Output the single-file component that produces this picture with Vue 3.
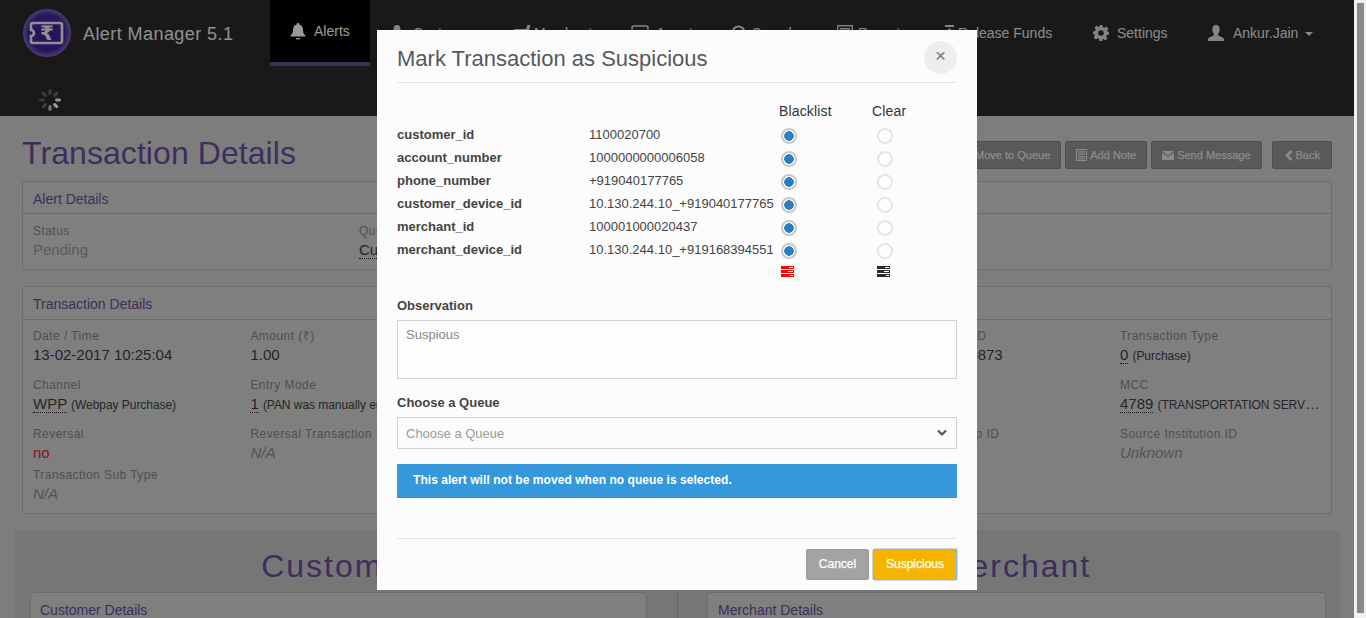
<script setup>
const navItems = [
  { key: 'alerts', label: 'Alerts', w: 100, box: 24, active: true },
  { key: 'person', label: 'Customer', w: 123, box: 23 },
  { key: 'cart', label: 'Merchant', w: 118, box: 21 },
  { key: 'square', label: 'Agent', w: 100, box: 25 },
  { key: 'search', label: 'Search', w: 106, box: 21 },
  { key: 'report', label: 'Reports', w: 108, box: 21 },
  { key: 'release', label: 'Release Funds', w: 148, box: 13 },
  { key: 'gear', label: 'Settings', w: 115, box: 24 },
  { key: 'user', label: 'Ankur.Jain', w: 150, box: 25, caret: true }
]
const dots = [
  { a: 0, o: 0.95 }, { a: 45, o: 1 }, { a: 90, o: 0.7 }, { a: 135, o: 0.3 },
  { a: 180, o: 0.25 }, { a: 225, o: 0.25 }, { a: 270, o: 0.28 }, { a: 315, o: 0.3 }
]
const txnFields = [
  { label: 'Date / Time', value: '13-02-2017 10:25:04' },
  { label: 'Amount (₹)', value: '1.00' },
  { label: 'Authorization Code', value: '482913' },
  { label: 'Response Code', value: '00' },
  { label: 'Transaction ID', value: '017021300873' },
  { label: 'Transaction Type', abbr: '0', note: '(Purchase)' },
  { label: 'Channel', abbr: 'WPP', note: '(Webpay Purchase)' },
  { label: 'Entry Mode', abbr: '1', note: '(PAN was manually entered)' },
  { label: 'Terminal', value: '10293847' },
  { label: 'Card Type', value: 'Debit' },
  { label: 'Currency', value: 'INR' },
  { label: 'MCC', abbr: '4789', note: '(TRANSPORTATION SERVICES)' },
  { label: 'Reversal', value: 'no', tone: 'red', tight: true },
  { label: 'Reversal Transaction ID', value: 'N/A', tone: 'na', tight: true },
  { label: 'Source', value: 'N/A', tone: 'na', tight: true },
  { label: 'Destination', value: 'N/A', tone: 'na', tight: true },
  { label: 'Source Group ID', value: 'N/A', tone: 'na', tight: true },
  { label: 'Source Institution ID', value: 'Unknown', tone: 'na', tight: true },
  { label: 'Transaction Sub Type', value: 'N/A', tone: 'na', tight: true }
]
const entities = [
  { key: 'customer_id', value: '1100020700' },
  { key: 'account_number', value: '1000000000006058' },
  { key: 'phone_number', value: '+919040177765' },
  { key: 'customer_device_id', value: '10.130.244.10_+919040177765' },
  { key: 'merchant_id', value: '100001000020437' },
  { key: 'merchant_device_id', value: '10.130.244.10_+919168394551' }
]
</script>

<template>
  <div class="app">
    <div class="main">
      <header class="navbar">
        <div class="nav-top">
          <div class="brand">
            <svg class="logo" width="48" height="48" viewBox="0 0 48 48">
              <defs>
                <radialGradient id="lg" cx="50%" cy="50%" r="52%">
                  <stop offset="0%" stop-color="#3f1f9c" />
                  <stop offset="72%" stop-color="#42249a" />
                  <stop offset="100%" stop-color="#8a70c4" />
                </radialGradient>
              </defs>
              <circle cx="24" cy="24" r="24" fill="url(#lg)" />
              <path d="M10 14h27a2 2 0 0 1 2 2v16a2 2 0 0 1-2 2H10a2 2 0 0 1-2-2v-5a3 3 0 0 0 0-6v-5a2 2 0 0 1 2-2z" fill="none" stroke="#f2f2f2" stroke-width="2.6" />
              <text x="24" y="31" class="rupee">₹</text>
            </svg>
            <span class="brand-name">Alert Manager 5.1</span>
          </div>
          <nav class="nav">
            <a v-for="item in navItems" :key="item.key" class="nav-item" :class="{ active: item.active }" :style="{ width: item.w + 'px' }">
              <span class="nav-icon" :style="{ width: item.box + 'px' }">
                <svg v-if="item.key === 'alerts'" width="16" height="17" viewBox="0 0 16 17"><path d="M8 0a1.3 1.3 0 0 1 1.3 1.5C12 2.2 13 4.4 13 7c0 3 1 4.300 2.500 5.500v1H.5v-1C2 11.300 3 10 3 7c0-2.600 1-4.800 3.700-5.500A1.300 1.300 0 0 1 8 0z" fill="#fff"/><rect x="6" y="15" width="4" height="1.300" fill="#fff"/></svg>
                <svg v-else-if="item.key === 'person'" width="14" height="16" viewBox="0 0 14 16"><path d="M7 0c2.500 0 3.500 2 3.500 4.500S9 9 9 10c0 1 5 1.500 5 4v2H0v-2c0-2.500 5-3 5-4S3.500 7 3.500 4.500 4.500 0 7 0z" fill="#ddd"/></svg>
                <svg v-else-if="item.key === 'cart'" width="18" height="16" viewBox="0 0 18 16"><path d="M17 0v2L14 11H4L1 4h12l1.500-4z" fill="#ddd"/></svg>
                <svg v-else-if="item.key === 'square'" width="18" height="16" viewBox="0 0 18 16"><rect x="1" y="1" width="16" height="14" rx="2" fill="none" stroke="#ddd" stroke-width="1.500"/></svg>
                <svg v-else-if="item.key === 'search'" width="18" height="18" viewBox="0 0 18 18"><circle cx="7.500" cy="7.500" r="6" fill="none" stroke="#ddd" stroke-width="2"/><path d="M12 12l5 5" stroke="#ddd" stroke-width="2.500"/></svg>
                <svg v-else-if="item.key === 'report'" width="16" height="16" viewBox="0 0 16 16"><rect x=".7" y=".7" width="14.600" height="14.600" fill="none" stroke="#ddd" stroke-width="1.400"/><path d="M3 3h10v1.500H3zM3 6.500h10V8H3zM3 10h10v1.500H3z" fill="#ddd"/></svg>
                <svg v-else-if="item.key === 'release'" width="9" height="16" viewBox="0 0 9 16"><path d="M0 0h9v2H0zM4.500 3L8 7H5.500v9h-2V7H1z" fill="#ddd"/></svg>
                <svg v-else-if="item.key === 'gear'" width="16" height="16" viewBox="0 0 16 16"><path d="M6.500 0h3l.4 2.200 1.500.6 1.900-1.300 2.100 2.100-1.300 1.900.6 1.500L16 6.500v3l-2.200.4-.6 1.500 1.300 1.900-2.100 2.100-1.900-1.300-1.500.6L9.500 16h-3l-.4-2.200-1.500-.6-1.900 1.300-2.100-2.100 1.300-1.900-.6-1.500L0 9.500v-3l2.200-.4.6-1.500L1.500 2.700l2.100-2.100 1.900 1.300 1.500-.6zM8 5.200a2.800 2.800 0 1 0 0 5.600 2.800 2.800 0 0 0 0-5.600z" fill="#ddd" fill-rule="evenodd"/></svg>
                <svg v-else width="16" height="16" viewBox="0 0 16 16"><path d="M8 0c2.500 0 3.700 2 3.700 4.500S10 9 10 10c0 1.200 6 1.800 6 4.500V16H0v-1.500C0 11.800 6 11.200 6 10c0-1-1.700-3-1.700-5.500S5.500 0 8 0z" fill="#ddd"/></svg>
              </span>
              <span>{{ item.label }}</span>
              <span v-if="item.caret" class="caret"></span>
            </a>
          </nav>
        </div>
        <div class="nav-bottom">
          <svg width="22" height="22" viewBox="0 0 22 22">
            <ellipse v-for="d in dots" :key="d.a" cx="19" cy="11" rx="3" ry="1.700" fill="#fff" :opacity="d.o" :transform="`rotate(${d.a} 11 11)`" />
          </svg>
        </div>
      </header>

      <main class="content">
        <div class="title-row">
          <h1>Transaction Details</h1>
          <div class="actions">
            <button class="btn">
              <svg width="12" height="11" viewBox="0 0 12 11"><path d="M0 1h12v9H0z" fill="#e6e6e6"/></svg>Move to Queue
            </button>
            <button class="btn">
              <svg width="11" height="12" viewBox="0 0 11 12"><path d="M0 0h11v12H0zM1 1v10h9V1zM2 2.200h7v1.200H2zM2 4.600h7v1.200H2zM2 7h7v1.200H2zM2 9.300h7v1H2z" fill="#e6e6e6" fill-rule="evenodd"/></svg>Add Note
            </button>
            <button class="btn">
              <svg width="12" height="9" viewBox="0 0 12 9"><path d="M0 0h12L6 4.500zM0 1.500l6 4.500 6-4.500V9H0z" fill="#e6e6e6"/></svg>Send Message
            </button>
            <button class="btn back">
              <svg width="9" height="11" viewBox="0 0 9 11"><path d="M6.500 0L8.500 2 5 5.500 8.500 9l-2 2L1 5.500z" fill="#e6e6e6"/></svg>Back
            </button>
          </div>
        </div>

        <section class="panel alert-panel">
          <div class="panel-head">Alert Details</div>
          <div class="alert-body">
            <div class="field">
              <div class="label">Status</div>
              <div class="value pending">Pending</div>
            </div>
            <div class="field">
              <div class="label">Queue</div>
              <div class="value"><abbr>Customer Queue</abbr></div>
            </div>
          </div>
        </section>

        <section class="panel txn-panel">
          <div class="panel-head">Transaction Details</div>
          <div class="txn-body">
            <div v-for="f in txnFields" :key="f.label" class="field" :class="{ tight: f.tight }">
              <div class="label">{{ f.label }}</div>
              <div class="value" :class="f.tone">
                <template v-if="f.abbr"><abbr>{{ f.abbr }}</abbr> <small>{{ f.note }}</small></template>
                <template v-else>{{ f.value }}</template>
              </div>
            </div>
          </div>
        </section>

        <section class="split">
          <div class="split-col">
            <h2>Customer</h2>
            <div class="panel"><div class="panel-head">Customer Details</div></div>
          </div>
          <div class="split-rule"></div>
          <div class="split-col wide">
            <h2>Merchant</h2>
            <div class="panel"><div class="panel-head">Merchant Details</div></div>
          </div>
        </section>
      </main>

      <div class="overlay"></div>

      <div class="modal">
        <div class="modal-head">
          <div class="modal-title">Mark Transaction as Suspicious</div>
          <button class="close">×</button>
        </div>

        <div class="grid-head">
          <span></span><span></span><span>Blacklist</span><span>Clear</span>
        </div>
        <div v-for="row in entities" :key="row.key" class="grid-row">
          <span class="k">{{ row.key }}</span>
          <span class="v">{{ row.value }}</span>
          <span class="radio-cell"><i class="radio on"></i></span>
          <span class="radio-cell"><i class="radio"></i></span>
        </div>
        <div class="grid-icons">
          <span></span><span></span>
          <span class="srv-cell">
            <svg width="13" height="11" viewBox="0 0 13 11"><path d="M0 0h13v3H0zM0 4h13v3H0zM0 8h13v3H0z" fill="#f00"/><path d="M8 1h4v1H8zM7 5h5v1H7zM9 9h3v1H9z" fill="#fff"/></svg>
          </span>
          <span class="srv-cell">
            <svg width="13" height="11" viewBox="0 0 13 11"><path d="M0 0h13v3H0zM0 4h13v3H0zM0 8h13v3H0z" fill="#2b2b2b"/><path d="M8 1h4v1H8zM7 5h5v1H7zM9 9h3v1H9z" fill="#fff"/></svg>
          </span>
        </div>

        <label class="f-label obs">Observation</label>
        <div class="textarea">Suspious</div>

        <label class="f-label queue">Choose a Queue</label>
        <div class="select">
          <span>Choose a Queue</span>
          <svg width="10" height="8" viewBox="0 0 10 8"><path d="M1 1.500l4 4 4-4" fill="none" stroke="#555" stroke-width="2.200"/></svg>
        </div>

        <div class="info">This alert will not be moved when no queue is selected.</div>

        <div class="modal-foot">
          <button class="m-btn cancel">Cancel</button>
          <button class="m-btn primary">Suspicious</button>
        </div>
      </div>
    </div>
    <div class="scrollbar"><div class="thumb"></div></div>
  </div>
</template>

<style>
html, body { margin: 0; padding: 0; overflow: hidden; }
</style>

<style scoped>
* { box-sizing: border-box; }
.app {
  display: flex;
  height: 618px;
  overflow: hidden;
  font-family: "Liberation Sans", Arial, sans-serif;
  font-size: 14px;
}
.main { position: relative; flex: 1; overflow: hidden; background: #d0d0d0; }
.scrollbar { width: 12px; background: #f1f1f1; padding: 3px 2px 5px 3px; }
.thumb { height: 100%; background: #8a8a8a; }

.navbar { height: 116px; background: #2b2b2b; }
.nav-top { display: flex; height: 66px; }
.brand { display: flex; align-items: flex-start; width: 270px; padding: 9px 0 0 23px; }
.logo { flex: none; }
.rupee { font: bold 20px "Liberation Sans", "DejaVu Sans", sans-serif; fill: #f2f2f2; text-anchor: middle; }
.brand-name { margin: 15px 0 0 12px; font-size: 18px; line-height: 21px; letter-spacing: 0.43px; color: #eee; }
.nav { display: flex; }
.nav-item { display: flex; align-items: flex-start; padding: 25px 0 0 20px; line-height: 16px; color: #e6e6e6; flex: none; }
.nav-item.active { background: #000; color: #fff; border-bottom: 4px solid #664e9c; padding-top: 23px; }
.nav-icon { display: flex; flex: none; align-items: flex-start; }
.caret {
  width: 0; height: 0; margin: 7px 0 0 7px;
  border-left: 4px solid transparent; border-right: 4px solid transparent; border-top: 4px solid #e6e6e6;
}
.nav-bottom { display: flex; padding: 23px 0 0 39px; }

.content { padding: 0 22px; }
.title-row { display: flex; justify-content: space-between; align-items: center; height: 65px; padding-top: 10px; }
h1 { margin: 0; font-size: 32px; letter-spacing: 0.07px; font-weight: 400; color: #664e9c; line-height: 55px; }
.actions { display: flex; gap: 4px; padding-top: 3px; }
.btn {
  display: flex; align-items: center; gap: 3px; height: 28px; padding: 0 10px;
  background: #949494; border: 1px solid #848484; border-radius: 2px;
  font: 400 11px "Liberation Sans", Arial, sans-serif; color: #e6e6e6;
  -webkit-text-stroke: 0.25px #e6e6e6;
}
.back { margin-left: 6px; padding: 0 11px; }

.panel { background: #d4d4d4; border: 1px solid #b4b4b4; border-radius: 3px; }
.panel-head { height: 32px; padding-left: 10px; line-height: 34px; color: #664e9c; border-bottom: 1px solid #b4b4b4; }
.alert-panel { margin-top: 0; height: 89px; }
.alert-body { display: grid; grid-template-columns: repeat(4, 326px); padding: 9px 10px 0; }
.txn-panel { margin-top: 16px; height: 228px; }
.txn-panel .panel-head { height: 33px; }
.txn-body { display: grid; grid-template-columns: repeat(6, 200.4px); column-gap: 17px; padding: 8px 10px 0; }
.field { min-width: 0; margin-bottom: 12px; }
.field.tight { margin-bottom: 4px; }
.label { font-size: 12px; line-height: 17px; letter-spacing: 0.45px; color: #858585; white-space: nowrap; }
.value { height: 21px; margin-top: -1px; font-size: 15px; line-height: 21px; color: #3e3e3e; white-space: nowrap; overflow: hidden; text-overflow: ellipsis; }
.value small { font-size: 12px; letter-spacing: -0.05px; }
.value abbr { border-bottom: 1px dotted #222; }
.pending { color: #999; }
.red { color: #e61b35; }
.na { color: #8c8c8c; font-style: italic; }

.split { display: flex; margin: 16px -8px 0; height: 120px; padding: 0 14px 0 16px; background: #c5c5c5; }
.split-col { flex: none; width: 617px; }
.split-col.wide { width: 619px; }
.split-col .panel-head { padding-left: 9px; }
.split-col.wide .panel-head { padding-left: 10px; }
.split-col h2 { margin: 0; height: 62px; font-size: 32px; line-height: 72px; font-weight: 400; letter-spacing: 2px; text-align: center; color: #664e9c; }
.split-rule { flex: none; width: 1px; margin: 62px 29px 0 30px; background: #a8a8a8; }

.overlay { position: absolute; inset: 0; background: rgba(0, 0, 0, 0.4); }

.modal {
  position: absolute; left: 377px; top: 30px; width: 600px; height: 560px;
  padding: 0 20px 10px; background: #fcfcfc; color: #333;
}
.modal-head { display: flex; justify-content: space-between; align-items: flex-end; padding: 11px 0 8px; border-bottom: 1px solid #e5e5e5; }
.modal-title { font-size: 22px; line-height: 30px; color: #54595e; }
.close { width: 33px; height: 33px; padding: 0 0 4px; border: 0; border-radius: 50%; background: #eee; color: #777; font: 19px/1 "Liberation Sans", Arial, sans-serif; }

.grid-head, .grid-row, .grid-icons { display: grid; grid-template-columns: 192px 190px 93px 1fr; align-items: center; }
.grid-head { height: 22px; margin-top: 17px; margin-bottom: 1px; font-size: 14px; letter-spacing: 0.15px; color: #333; }
.grid-row { height: 23px; font-size: 13px; }
.k { font-weight: 700; color: #444; }
.v { color: #444; white-space: nowrap; }
.radio-cell { display: flex; height: 23px; padding-top: 5px; padding-left: 2px; }
.radio-cell:last-child { padding-left: 5px; }
.radio { display: block; width: 16px; height: 16px; border: 2px solid #e5e5e5; border-radius: 50%; background: #fff; }
.radio.on { border-color: #c8c8c8; background: radial-gradient(circle, #2a7fc0 0 4.500px, #fff 5px); }
.grid-icons { height: 19px; }
.srv-cell { display: flex; padding-left: 2px; padding-top: 1px; }
.srv-cell:last-child { padding-left: 5px; }

.f-label { display: block; font-size: 13px; line-height: 18px; font-weight: 700; color: #444; }
.obs { margin-top: 17px; }
.queue { margin-top: 15px; }
.textarea { height: 59px; margin-top: 5px; padding: 6px 8px; border: 1px solid #d2d2d2; font-size: 13px; line-height: 16px; color: #888; background: #fdfdfd; }
.select { display: flex; justify-content: space-between; align-items: center; height: 32px; margin-top: 5px; padding: 0 9px 0 8px; border: 1px solid #d2d2d2; font-size: 13px; color: #999; }
.info { height: 34px; margin-top: 15px; padding-left: 16px; line-height: 33px; font-size: 12px; letter-spacing: 0.05px; font-weight: 700; color: #fff; background: #3498db; }
.modal-foot { display: flex; justify-content: flex-end; gap: 4px; margin-top: 40px; padding-top: 10px; border-top: 1px solid #e5e5e5; }
.m-btn { height: 31px; padding: 0 0 2px; border-radius: 2px; font: 400 12px "Liberation Sans", Arial, sans-serif; color: #fff; -webkit-text-stroke: 0.25px #fff; }
.cancel { width: 63px; background: #a3a3a3; border: 1px solid #999; }
.primary { width: 84px; background: #f4b400; border: 1px solid #8bb4e8; box-shadow: 0 0 0 0.500px #8bb4e8; }
</style>
